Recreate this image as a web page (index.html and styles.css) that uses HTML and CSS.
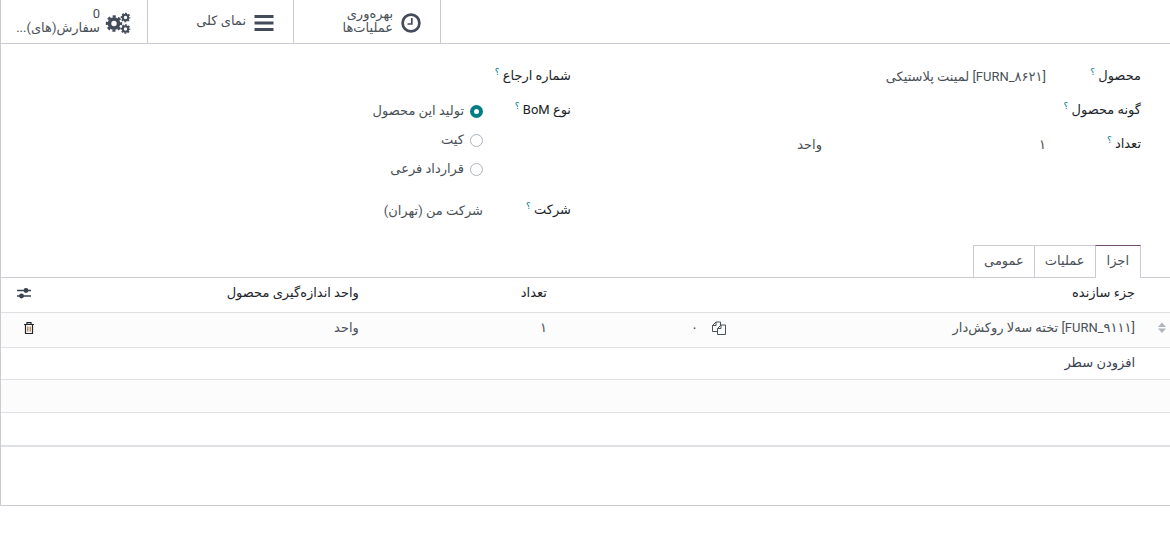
FILE: index.html
```html
<!DOCTYPE html>
<html lang="fa" dir="rtl">
<head>
<meta charset="utf-8">
<meta name="viewport" content="width=device-width, initial-scale=1">
<title>صورت مواد</title>
<link rel="stylesheet" href="styles.css">
</head>
<body>
<main class="sheet">
  <div class="stat-bar">
    <button class="stat stat-wide" type="button">
      <svg class="stat-icon" viewBox="0 0 28 22" aria-hidden="true"><circle cx="14" cy="11" r="8.4" fill="none" stroke="currentColor" stroke-width="2.7"/><path d="M14.8 6v6H10.5" fill="none" stroke="currentColor" stroke-width="1.7"/></svg>
      <span class="stat-text">بهره‌وری<br>عملیات‌ها</span>
    </button>
    <button class="stat" type="button">
      <svg class="stat-icon" viewBox="0 0 28 22" aria-hidden="true"><path d="M4.500 3h19v3h-19zM4.500 9.500h19v3h-19zM4.500 16h19v3h-19z" fill="currentColor"/></svg>
      <span class="stat-text">نمای کلی</span>
    </button>
    <button class="stat stat-wide" type="button">
      <svg class="stat-icon" viewBox="0 0 28 22" aria-hidden="true">
        <g fill="none" stroke="currentColor">
          <circle cx="10" cy="11.500" r="4.500" stroke-width="3.600"/>
          <circle cx="10" cy="11.500" r="7" stroke-width="2.400" stroke-dasharray="3.100 2.398" stroke-dashoffset="1.550"/>
          <circle cx="21.500" cy="5.500" r="2.700" stroke-width="2"/>
          <circle cx="21.500" cy="5.500" r="4.100" stroke-width="1.500" stroke-dasharray="1.900 1.320" stroke-dashoffset=".950"/>
          <circle cx="21.500" cy="17" r="2.700" stroke-width="2"/>
          <circle cx="21.500" cy="17" r="4.100" stroke-width="1.500" stroke-dasharray="1.900 1.320" stroke-dashoffset=".950"/>
        </g>
      </svg>
      <span class="stat-text">0<br>سفارش(های)...</span>
    </button>
  </div>

  <div class="form">
    <div class="group group-product">
      <label class="label" for="product">محصول <sup class="help">؟</sup></label>
      <input class="field" id="product" type="text" value="[FURN_۸۶۲۱] لمینت پلاستیکی">
      <label class="label" for="variant">گونه محصول <sup class="help">؟</sup></label>
      <input class="field" id="variant" type="text">
      <label class="label" for="qty">تعداد <sup class="help">؟</sup></label>
      <div class="pair">
        <input class="field" id="qty" type="text" value="۱">
        <input class="field" type="text" value="واحد" aria-label="واحد">
      </div>
    </div>
    <div class="group group-type">
      <label class="label" for="reference">شماره ارجاع <sup class="help">؟</sup></label>
      <input class="field" id="reference" type="text">
      <span class="label" id="bom-type">نوع BoM <sup class="help">؟</sup></span>
      <div class="radios" role="radiogroup" aria-labelledby="bom-type">
        <label class="option"><input class="radio" type="radio" name="type" checked>تولید این محصول</label>
        <label class="option"><input class="radio" type="radio" name="type">کیت</label>
        <label class="option"><input class="radio" type="radio" name="type">قرارداد فرعی</label>
      </div>
      <label class="label" for="company">شرکت <sup class="help">؟</sup></label>
      <input class="field" id="company" type="text" value="شرکت من (تهران)">
    </div>
  </div>

  <div class="tabs" role="tablist">
    <button class="tab tab-active" type="button" role="tab" aria-selected="true">اجزا</button>
    <button class="tab" type="button" role="tab" aria-selected="false">عملیات</button>
    <button class="tab" type="button" role="tab" aria-selected="false">عمومی</button>
  </div>

  <table class="lines">
    <colgroup><col class="col-handle"><col class="col-component"><col class="col-copy"><col class="col-qty"><col><col class="col-actions"></colgroup>
    <thead>
      <tr>
        <th></th><th>جزء سازنده</th><th></th><th>تعداد</th><th>واحد اندازه‌گیری محصول</th>
        <th class="options"><button class="icon-button" type="button" aria-label="ستون‌ها"><svg class="sliders" viewBox="0 0 14 12" aria-hidden="true"><path d="M0 3.500h14M0 9h14" stroke="currentColor" stroke-width="1.300"/><circle cx="9" cy="3.500" r="2.400" fill="currentColor"/><circle cx="4.500" cy="9" r="2.400" fill="currentColor"/></svg></button></th>
      </tr>
    </thead>
    <tbody>
      <tr class="row shaded">
        <td class="handle"><svg class="sort" viewBox="0 0 8 12" aria-hidden="true"><path d="M4 .500l4 4.500H0zM0 6.500h8l-4 4.500z" fill="currentColor"/></svg></td>
        <td>[FURN_۹۱۱۱] تخته سه‌لا روکش‌دار</td>
        <td><div class="copies"><button class="icon-button" type="button" aria-label="رونوشت"><svg class="copy" viewBox="0 0 14 14" aria-hidden="true"><path d="M5.500 10.500H.500V4.500L4 1H8.500V4M4 1V4.500H.500M9 4H13.500V13.500H5.500V7.500L9 4V7.500H5.500" fill="none" stroke="currentColor"/></svg></button><span>۰</span></div></td>
        <td>۱</td>
        <td>واحد</td>
        <td class="remove"><button class="icon-button" type="button" aria-label="حذف"><svg class="trash" viewBox="0 0 10 12" aria-hidden="true"><path d="M0 2.500h10M3 2.500V.700h4v1.800M1.500 2.500v9h7v-9" fill="none" stroke="currentColor" stroke-width="1.200"/><path d="M3.500 4.500v5M5 4.500v5M6.500 4.500v5" stroke="#a8733c" stroke-width=".800"/></svg></button></td>
      </tr>
      <tr class="row-add"><td></td><td colspan="5"><button class="add" type="button">افزودن سطر</button></td></tr>
      <tr class="row-empty shaded"><td colspan="6"></td></tr>
      <tr class="row-empty"><td colspan="6"></td></tr>
    </tbody>
  </table>
</main>
</body>
</html>
```
FILE: styles.css
```css
* {
  box-sizing: border-box;
}

body {
  margin: 0;
  background: #fff;
  color: #495057;
  font: 13px/20px Roboto, "DejaVu Sans", sans-serif;
}

button,
input {
  margin: 0;
  padding: 0;
  border: 0;
  background: transparent;
  color: inherit;
  font: inherit;
}

.sheet {
  padding-bottom: 58px;
  border-left: 1px solid #c9ccd5;
  border-bottom: 1px solid #c9ccd5;
  box-shadow: 0 1px 1px #e7e9ed;
}

.stat-bar {
  display: flex;
  justify-content: flex-end;
  height: 44px;
  border-bottom: 1px solid #c9ccd5;
}

.stat {
  display: flex;
  align-items: center;
  gap: 4px;
  width: 146px;
  padding: 2px 15px 0 8px;
  border-right: 1px solid #c9ccd5;
  color: #495057;
  text-align: right;
  line-height: 14px;
  white-space: nowrap;
}

.stat-wide {
  width: 147px;
}

.stat-icon {
  flex: none;
  width: 28px;
  height: 22px;
  color: #444b5a;
}

.stat-text {
  padding-bottom: 4px;
}

.form {
  display: grid;
  grid-template-columns: 1fr 1fr;
  gap: 30px;
  padding: 15px 29px 22px 30px;
}

.group {
  display: grid;
  grid-auto-rows: min-content;
  gap: 4px 0;
}

.group-product {
  grid-template-columns: 95px 1fr;
}

.group-type {
  grid-template-columns: 88px 1fr;
}

.label {
  height: 30px;
  color: #212529;
  line-height: 34px;
  white-space: nowrap;
}

.help {
  color: #017e84;
  font-size: 9px;
  line-height: 0;
  vertical-align: 5px;
}

.field {
  width: 100%;
  min-width: 0;
  height: 30px;
  padding-top: 4px;
}

.pair {
  display: grid;
  grid-template-columns: 224px 1fr;
}

.radios {
  display: grid;
  gap: 9px;
  padding: 8px 0 10px;
}

.option {
  display: flex;
  align-items: center;
  gap: 6px;
}

.radio {
  appearance: none;
  width: 13px;
  height: 13px;
  border: 1px solid #adb5bd;
  border-radius: 50%;
  background: #fff;
}

.radio:checked {
  border: 4px solid #017e84;
}

.tabs {
  display: flex;
  padding-right: 29px;
  border-bottom: 1px solid #c9ccd5;
}

.tab {
  height: 32px;
  padding: 0 10px 2px;
  border: 1px solid #c9ccd5;
  border-right: 0;
  border-bottom: 0;
}

.tab-active {
  height: 33px;
  margin-bottom: -1px;
  padding: 0 11px 3px;
  border-top-color: #714b67;
  border-right: 1px solid #c9ccd5;
  background: #fff;
}

.lines {
  width: 100%;
  border-collapse: separate;
  border-spacing: 0;
  border-bottom: 1px solid #dee0e4;
  table-layout: fixed;
}

.col-handle {
  width: 30px;
}

.col-component {
  width: 35%;
}

.col-copy {
  width: 179px;
}

.col-qty {
  width: 188px;
}

.col-actions {
  width: 48px;
}

th,
td {
  padding: 0 5px;
  border-bottom: 1px solid #dee0e4;
  text-align: right;
  white-space: nowrap;
}

th {
  height: 35px;
  padding-bottom: 4px;
  color: #212529;
  font-weight: 400;
}

.row td {
  height: 35px;
  padding-bottom: 4px;
}

.row-add td {
  height: 32px;
  padding-bottom: 2px;
}

.row-empty td {
  height: 33px;
}

.shaded td {
  background: #fcfcfc;
}

.handle {
  padding-right: 4px;
  color: #adb5bd;
}

.icon-button {
  display: flex;
}

.sort {
  display: block;
  width: 8px;
  height: 12px;
}

.copies {
  display: flex;
  align-items: center;
  gap: 14px;
}

.copy {
  width: 14px;
  height: 14px;
}

.options {
  padding-right: 18px;
  color: #374151;
}

.sliders {
  width: 14px;
  height: 12px;
}

.remove {
  padding-right: 15px;
  color: #212529;
}

.trash {
  width: 10px;
  height: 12px;
}

.add {
  color: #374151;
}
```
